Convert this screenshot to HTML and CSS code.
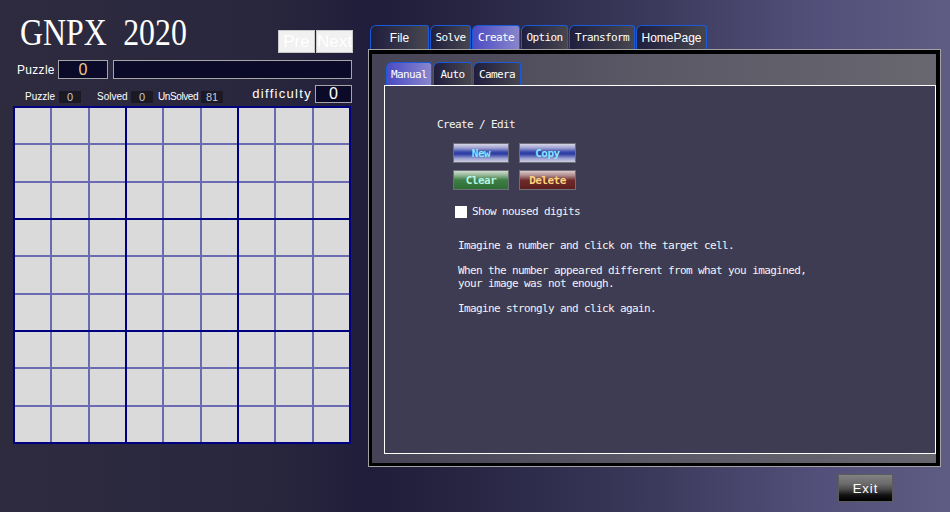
FILE: index.html
```html
<!DOCTYPE html>
<html>
<head>
<meta charset="utf-8">
<title>GNPX 2020</title>
<link rel="stylesheet" href="styles.css">
</head>
<body>
<div class="app">
  <section class="left">
    <div class="titlerow">
      <h1 class="title">GNPX 2020</h1>
      <div class="nav">
        <button class="navbtn">Pre</button>
        <button class="navbtn">Next</button>
      </div>
    </div>
    <div class="puzrow">
      <span class="lbl">Puzzle</span>
      <div class="numbox">0</div>
      <div class="namebox"></div>
    </div>
    <div class="statrow">
      <span class="slbl s1">Puzzle</span><span class="sbox">0</span>
      <span class="slbl s2">Solved</span><span class="sbox">0</span>
      <span class="slbl s3">UnSolved</span><span class="sbox">81</span>
      <span class="dlbl">difficulty</span><span class="dbox">0</span>
    </div>
    <div class="board">
      <div class="block"><div class="cell"></div><div class="cell"></div><div class="cell"></div><div class="cell"></div><div class="cell"></div><div class="cell"></div><div class="cell"></div><div class="cell"></div><div class="cell"></div></div>
      <div class="block"><div class="cell"></div><div class="cell"></div><div class="cell"></div><div class="cell"></div><div class="cell"></div><div class="cell"></div><div class="cell"></div><div class="cell"></div><div class="cell"></div></div>
      <div class="block"><div class="cell"></div><div class="cell"></div><div class="cell"></div><div class="cell"></div><div class="cell"></div><div class="cell"></div><div class="cell"></div><div class="cell"></div><div class="cell"></div></div>
      <div class="block"><div class="cell"></div><div class="cell"></div><div class="cell"></div><div class="cell"></div><div class="cell"></div><div class="cell"></div><div class="cell"></div><div class="cell"></div><div class="cell"></div></div>
      <div class="block"><div class="cell"></div><div class="cell"></div><div class="cell"></div><div class="cell"></div><div class="cell"></div><div class="cell"></div><div class="cell"></div><div class="cell"></div><div class="cell"></div></div>
      <div class="block"><div class="cell"></div><div class="cell"></div><div class="cell"></div><div class="cell"></div><div class="cell"></div><div class="cell"></div><div class="cell"></div><div class="cell"></div><div class="cell"></div></div>
      <div class="block"><div class="cell"></div><div class="cell"></div><div class="cell"></div><div class="cell"></div><div class="cell"></div><div class="cell"></div><div class="cell"></div><div class="cell"></div><div class="cell"></div></div>
      <div class="block"><div class="cell"></div><div class="cell"></div><div class="cell"></div><div class="cell"></div><div class="cell"></div><div class="cell"></div><div class="cell"></div><div class="cell"></div><div class="cell"></div></div>
      <div class="block"><div class="cell"></div><div class="cell"></div><div class="cell"></div><div class="cell"></div><div class="cell"></div><div class="cell"></div><div class="cell"></div><div class="cell"></div><div class="cell"></div></div>
    </div>
  </section>

  <section class="right">
    <nav class="tabs">
      <div class="tab sans w-file">File</div>
      <div class="tab w-solve">Solve</div>
      <div class="tab active w-create">Create</div>
      <div class="tab w-option">Option</div>
      <div class="tab w-transform">Transform</div>
      <div class="tab sans w-home">HomePage</div>
    </nav>
    <div class="frame">
      <div class="frame-in">
        <nav class="subtabs">
          <div class="tab sub active w-manual">Manual</div>
          <div class="tab sub w-auto">Auto</div>
          <div class="tab sub w-camera">Camera</div>
        </nav>
        <div class="page">
          <div class="heading">Create / Edit</div>
          <div class="btngrid">
            <button class="ebtn blue">New</button>
            <button class="ebtn blue">Copy</button>
            <button class="ebtn green">Clear</button>
            <button class="ebtn red">Delete</button>
          </div>
          <label class="check"><span class="box"></span><span>Show noused digits</span></label>
          <div class="notes">
            <p>Imagine a number and click on the target cell.</p>
            <p>When the number appeared different from what you imagined,<br>your image was not enough.</p>
            <p>Imagine strongly and click again.</p>
          </div>
        </div>
      </div>
    </div>
    <div class="footer">
      <button class="exit">Exit</button>
    </div>
  </section>
</div>
</body>
</html>
```

FILE: styles.css
```css
html, body {
  margin: 0;
  padding: 0;
}
body {
  width: 950px;
  height: 512px;
  overflow: hidden;
  background: linear-gradient(to right, #2e2b3f 0%, #29273e 28%, #1f1d3a 39%, #262441 48%, #3d3b5d 70%, #52507a 86%, #5e5c82 100%);
  font-family: "Liberation Sans", Arial, sans-serif;
  color: #fff;
}
.app {
  display: flex;
  align-items: flex-start;
}

/* ---------- left column ---------- */
.left {
  width: 340px;
  margin-left: 13px;
  padding-top: 13px;
}
.titlerow {
  display: flex;
  justify-content: space-between;
  align-items: flex-end;
  height: 40px;
}
.title {
  margin: 0;
  padding-left: 7px;
  font-family: "Liberation Serif", "Times New Roman", serif;
  font-weight: normal;
  font-size: 37px;
  line-height: 40px;
  word-spacing: 10px;
  color: #fff;
  transform: scaleX(0.86);
  transform-origin: 7px 0;
  white-space: nowrap;
}
.nav {
  display: flex;
  gap: 1px;
}
.navbtn {
  width: 37px;
  height: 23px;
  padding: 0;
  border: 1px solid #c9c9c9;
  background: #f1f1f1;
  color: #fff;
  font-family: "Liberation Sans", Arial, sans-serif;
  font-size: 17px;
  line-height: 21px;
}
.puzrow {
  display: flex;
  align-items: center;
  height: 19px;
  margin-top: 7px;
}
.lbl {
  margin-left: 4px;
  width: 41px;
  font-size: 12px;
  letter-spacing: 0.3px;
  color: #fff;
}
.numbox, .namebox, .dbox {
  box-sizing: border-box;
  height: 19px;
  border: 1px solid #a6a6a6;
  background: #0b0a28;
}
.numbox {
  width: 50px;
  text-align: center;
  font-size: 16px;
  line-height: 17px;
  color: #f2c48a;
}
.namebox {
  width: 239px;
  margin-left: 5px;
}
.statrow {
  display: flex;
  align-items: flex-end;
  height: 18px;
  margin-top: 6px;
}
.slbl {
  font-size: 10px;
  line-height: 12px;
  color: #fff;
}
.s1 { margin-left: 12px; width: 34px; }
.s2 { margin-left: 16px; width: 34px; }
.s3 { margin-left: 5px; width: 43px; letter-spacing: -0.4px; }
.sbox {
  width: 22px;
  height: 12px;
  background: #1b1a24;
  color: #c8c8d8;
  font-size: 11px;
  line-height: 12px;
  text-align: center;
}
.dlbl {
  margin-left: auto;
  margin-right: 3px;
  font-size: 13px;
  line-height: 18px;
  letter-spacing: 1.3px;
  color: #fff;
}
.dbox {
  width: 37px;
  height: 18px;
  margin-right: 1px;
  text-align: center;
  font-size: 16px;
  line-height: 16px;
  color: #fff;
}
.board {
  box-sizing: border-box;
  width: 338px;
  height: 338px;
  margin-top: 3px;
  border: 2px solid #000080;
  background: #000080;
  display: grid;
  grid-template-columns: repeat(3, 1fr);
  grid-template-rows: repeat(3, 1fr);
  gap: 2px;
}
.block {
  display: grid;
  grid-template-columns: repeat(3, 1fr);
  grid-template-rows: repeat(3, 1fr);
  gap: 2px;
  background: #6b6bb1;
}
.cell {
  background: #dadada;
}

/* ---------- right column ---------- */
.right {
  width: 573px;
  margin-left: 15px;
  padding-top: 25px;
}
.tabs {
  display: flex;
  height: 24px;
  padding-left: 2px;
}
.tab {
  box-sizing: border-box;
  height: 100%;
  margin-right: 1px;
  border: 1px solid #1b5ad6;
  border-bottom: 0;
  border-radius: 6px 3px 0 0;
  background: linear-gradient(to right, #1f1e3e, #47464f);
  color: #fff;
  display: flex;
  align-items: center;
  justify-content: center;
  font-family: "DejaVu Sans Mono", "Liberation Mono", monospace;
  font-size: 11px;
  letter-spacing: -0.6px;
}
.tab.sans {
  font-family: "Liberation Sans", Arial, sans-serif;
  font-size: 12px;
  letter-spacing: 0;
}
.tab.active {
  background: linear-gradient(to right, #4b4bc4, #8886cc);
}
.w-file { width: 59px; }
.w-solve { width: 41px; }
.w-create { width: 48px; }
.w-option { width: 47px; }
.w-transform { width: 66px; }
.w-home { width: 71px; }
.w-manual { width: 46px; }
.w-auto { width: 39px; }
.w-camera { width: 48px; }

.frame {
  border: 1px solid #a3a3a3;
}
.frame-in {
  border: solid #000;
  border-width: 4px 4px 3px 3px;
  padding: 8px 0 9px 12px;
  background: linear-gradient(to right, #454355 0%, #5b5966 50%, #68666f 100%);
}
.subtabs {
  display: flex;
  height: 23px;
  padding-left: 2px;
}
.page {
  box-sizing: border-box;
  height: 369px;
  border: 1px solid #fff;
  background: #3d3c52;
  padding: 32px 0 0 52px;
  font-family: "DejaVu Sans Mono", "Liberation Mono", monospace;
  font-size: 11px;
  letter-spacing: -0.62px;
  line-height: 13px;
  color: #f4f4f4;
}
.heading {
  height: 13px;
}
.btngrid {
  display: grid;
  grid-template-columns: 56px 57px;
  grid-auto-rows: 20px;
  column-gap: 10px;
  row-gap: 7px;
  margin: 12px 0 0 16px;
}
.ebtn {
  padding: 0;
  border: 1px solid #6f6f7a;
  font-family: "DejaVu Sans Mono", "Liberation Mono", monospace;
  font-size: 11px;
  font-weight: bold;
  letter-spacing: -0.5px;
}
.ebtn.blue {
  background: linear-gradient(to bottom, #d6d6e6 0%, #9ea2d2 22%, #3646aa 45%, #2a3aa2 55%, #9aa0d0 80%, #d0d0e2 100%);
  color: #86e6ff;
}
.ebtn.green {
  background: linear-gradient(to bottom, #d0dcd0 0%, #8fb493 25%, #3f7e45 50%, #2d6e35 100%);
  color: #b6f4e6;
}
.ebtn.red {
  background: linear-gradient(to bottom, #dccaca 0%, #b08c8c 25%, #6f2a2a 52%, #5e1e1e 100%);
  color: #ffd27a;
}
.check {
  display: flex;
  align-items: center;
  gap: 5px;
  height: 13px;
  margin: 15px 0 0 18px;
}
.box {
  width: 12px;
  height: 12px;
  background: #fff;
}
.notes {
  margin: 21px 0 0 21px;
}
.notes p {
  margin: 12px 0 0;
}
.notes p:first-child {
  margin-top: 0;
}
.footer {
  display: flex;
  justify-content: flex-end;
  padding-right: 48px;
  margin-top: 7px;
}
.exit {
  width: 55px;
  height: 28px;
  padding: 0;
  border: 1px solid #5c5c5c;
  background: linear-gradient(to bottom, #828282 0%, #6a6a6a 35%, #4a4a4a 55%, #111 78%, #000 100%);
  color: #fff;
  font-family: "Liberation Sans", Arial, sans-serif;
  font-size: 13px;
  letter-spacing: 1px;
}
```
